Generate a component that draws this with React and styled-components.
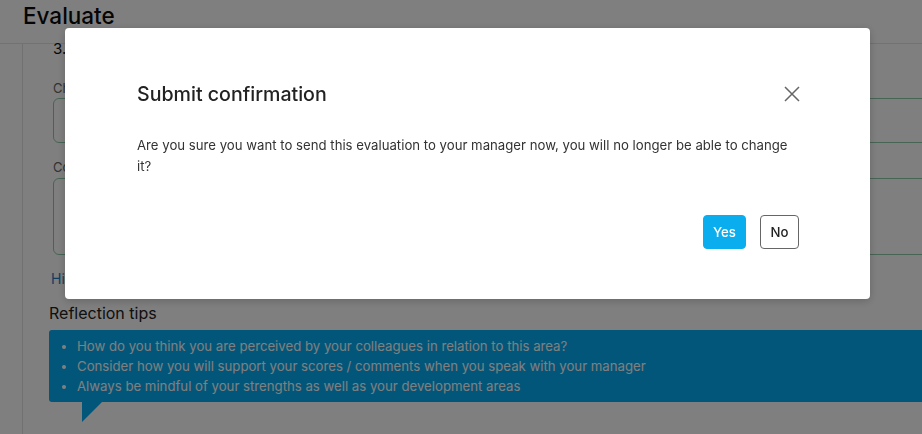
import React from 'react';
import styled, { createGlobalStyle } from 'styled-components';

const GlobalStyle = createGlobalStyle`
    html, body {
        margin: 0;
        padding: 0;
        background: #FFFFFF;
        font-family: Inter, "Noto Sans", "Liberation Sans", sans-serif;
        overflow: hidden;
    }
`;

const Page = styled.div`
    width: 922px;
    height: 434px;
    overflow: hidden;
    background: #FFFFFF;
`;

const TopBar = styled.div`
    height: 43px;
    border-bottom: 1px solid #E4E4E4;
    padding-left: 23px;
`;

const PageTitle = styled.h1`
    margin: 0;
    font-size: 22.5px;
    font-weight: 500;
    line-height: 32px;
    color: #0A0A0A;
`;

const Main = styled.div`
    display: flex;
    padding-left: 22px;
`;

const Panel = styled.div`
    border-left: 1px solid #E2E2E2;
    padding-left: 30px;
    width: 1000px;
    flex-shrink: 0;
    height: 390px;
`;

const Question = styled.div`
    margin-top: -5px;
    font-size: 15px;
    line-height: 20px;
    color: #111111;
`;

const FieldLabel = styled.div`
    margin-top: ${p => p.$top}px;
    font-size: 13px;
    line-height: 16px;
    color: #666666;
`;

const Field = styled.div`
    box-sizing: border-box;
    margin-top: ${p => p.$top}px;
    height: ${p => p.$height}px;
    border: 1px solid #8CCBAA;
    border-radius: 6px;
    padding: ${p => p.$pad};
    font-size: 14px;
    color: #9A5B22;
`;

const ToggleLink = styled.a`
    display: block;
    margin-top: 15px;
    margin-left: -2px;
    font-size: 14px;
    line-height: 18px;
    color: #1B7FC4;
`;

const Tips = styled.div`
    margin-top: 14px;
    margin-left: -4px;
`;

const TipsTitle = styled.div`
    font-size: 16px;
    line-height: 22px;
    color: #222222;
`;

const TipsBubble = styled.div`
    position: relative;
    margin-top: 6px;
    background: #04ACF4;
    border-radius: 3px;
    padding: 6px 0;
    &::after {
        content: '';
        position: absolute;
        left: 33px;
        top: 100%;
        border-top: 20px solid #04ACF4;
        border-right: 20px solid transparent;
    }
`;

const TipsList = styled.ul`
    margin: 0;
    padding-left: 28px;
    list-style: disc;
`;

const Tip = styled.li`
    font-size: 13.2px;
    line-height: 20px;
    color: #FFFFFF;
`;

const Overlay = styled.div`
    position: fixed;
    inset: 0;
    background: rgba(0, 0, 0, 0.5);
    display: flex;
    align-items: flex-start;
    justify-content: flex-start;
    padding: 28px 0 0 65px;
    z-index: 10;
`;

const Modal = styled.div`
    box-sizing: border-box;
    width: 805px;
    background: #FFFFFF;
    border-radius: 4px;
    box-shadow: 0 2px 8px rgba(0, 0, 0, 0.2);
    padding: 52px 70px 50px 72px;
`;

const ModalHeader = styled.div`
    display: flex;
    justify-content: space-between;
    align-items: center;
`;

const ModalTitle = styled.h2`
    margin: 0;
    font-size: 19.6px;
    font-weight: 500;
    line-height: 28px;
    color: #222222;
`;

const CloseButton = styled.button`
    border: none;
    background: transparent;
    padding: 0;
    width: 16px;
    height: 16px;
    display: flex;
    cursor: pointer;
`;

const ModalBody = styled.p`
    margin: 27px 0 0;
    font-size: 13.2px;
    line-height: 21px;
    color: #333333;
`;

const ModalFooter = styled.div`
    display: flex;
    justify-content: flex-end;
    gap: 14px;
    margin-top: 38px;
    padding-right: 1px;
`;

const ActionButton = styled.button`
    box-sizing: border-box;
    height: 34px;
    width: ${p => p.$width}px;
    border-radius: 4px;
    border: 1px solid ${p => p.$primary ? '#0AAEEF' : '#666666'};
    background: ${p => p.$primary ? '#0AAEEF' : '#FFFFFF'};
    color: ${p => p.$primary ? '#FFFFFF' : '#222222'};
    font-family: Inter, "Liberation Sans", sans-serif;
    font-size: 13.2px;
    font-weight: 500;
    padding: 0;
    cursor: pointer;
`;

const tips = [
    'How do you think you are perceived by your colleagues in relation to this area?',
    'Consider how you will support your scores / comments when you speak with your manager',
    'Always be mindful of your strengths as well as your development areas',
];

function App() {
    return (
        <Page>
            <GlobalStyle />
            <TopBar>
                <PageTitle>Evaluate</PageTitle>
            </TopBar>
            <Main>
                <Panel>
                    <Question>3. Teamwork</Question>
                    <FieldLabel $top={21}>Choose</FieldLabel>
                    <Field $top={2} $height={45} $pad="12px 11px">Select</Field>
                    <FieldLabel $top={16}>Comments</FieldLabel>
                    <Field $top={3} $height={77} $pad="10px 11px">Comment</Field>
                    <ToggleLink>Hide examples</ToggleLink>
                    <Tips>
                        <TipsTitle>Reflection tips</TipsTitle>
                        <TipsBubble>
                            <TipsList>
                                {tips.map(t => <Tip key={t}>{t}</Tip>)}
                            </TipsList>
                        </TipsBubble>
                    </Tips>
                </Panel>
            </Main>
            <Overlay>
                <Modal>
                    <ModalHeader>
                        <ModalTitle>Submit confirmation</ModalTitle>
                        <CloseButton aria-label="close">
                            <svg width="16" height="16" viewBox="0 0 16 16">
                                <path d="M1 1 L15 15 M15 1 L1 15" stroke="#666666" strokeWidth="1.5" fill="none" />
                            </svg>
                        </CloseButton>
                    </ModalHeader>
                    <ModalBody>
                        Are you sure you want to send this evaluation to your manager now, you will no longer be able to change it?
                    </ModalBody>
                    <ModalFooter>
                        <ActionButton $primary $width={43}>Yes</ActionButton>
                        <ActionButton $width={39}>No</ActionButton>
                    </ModalFooter>
                </Modal>
            </Overlay>
        </Page>
    );
}

export default App;
